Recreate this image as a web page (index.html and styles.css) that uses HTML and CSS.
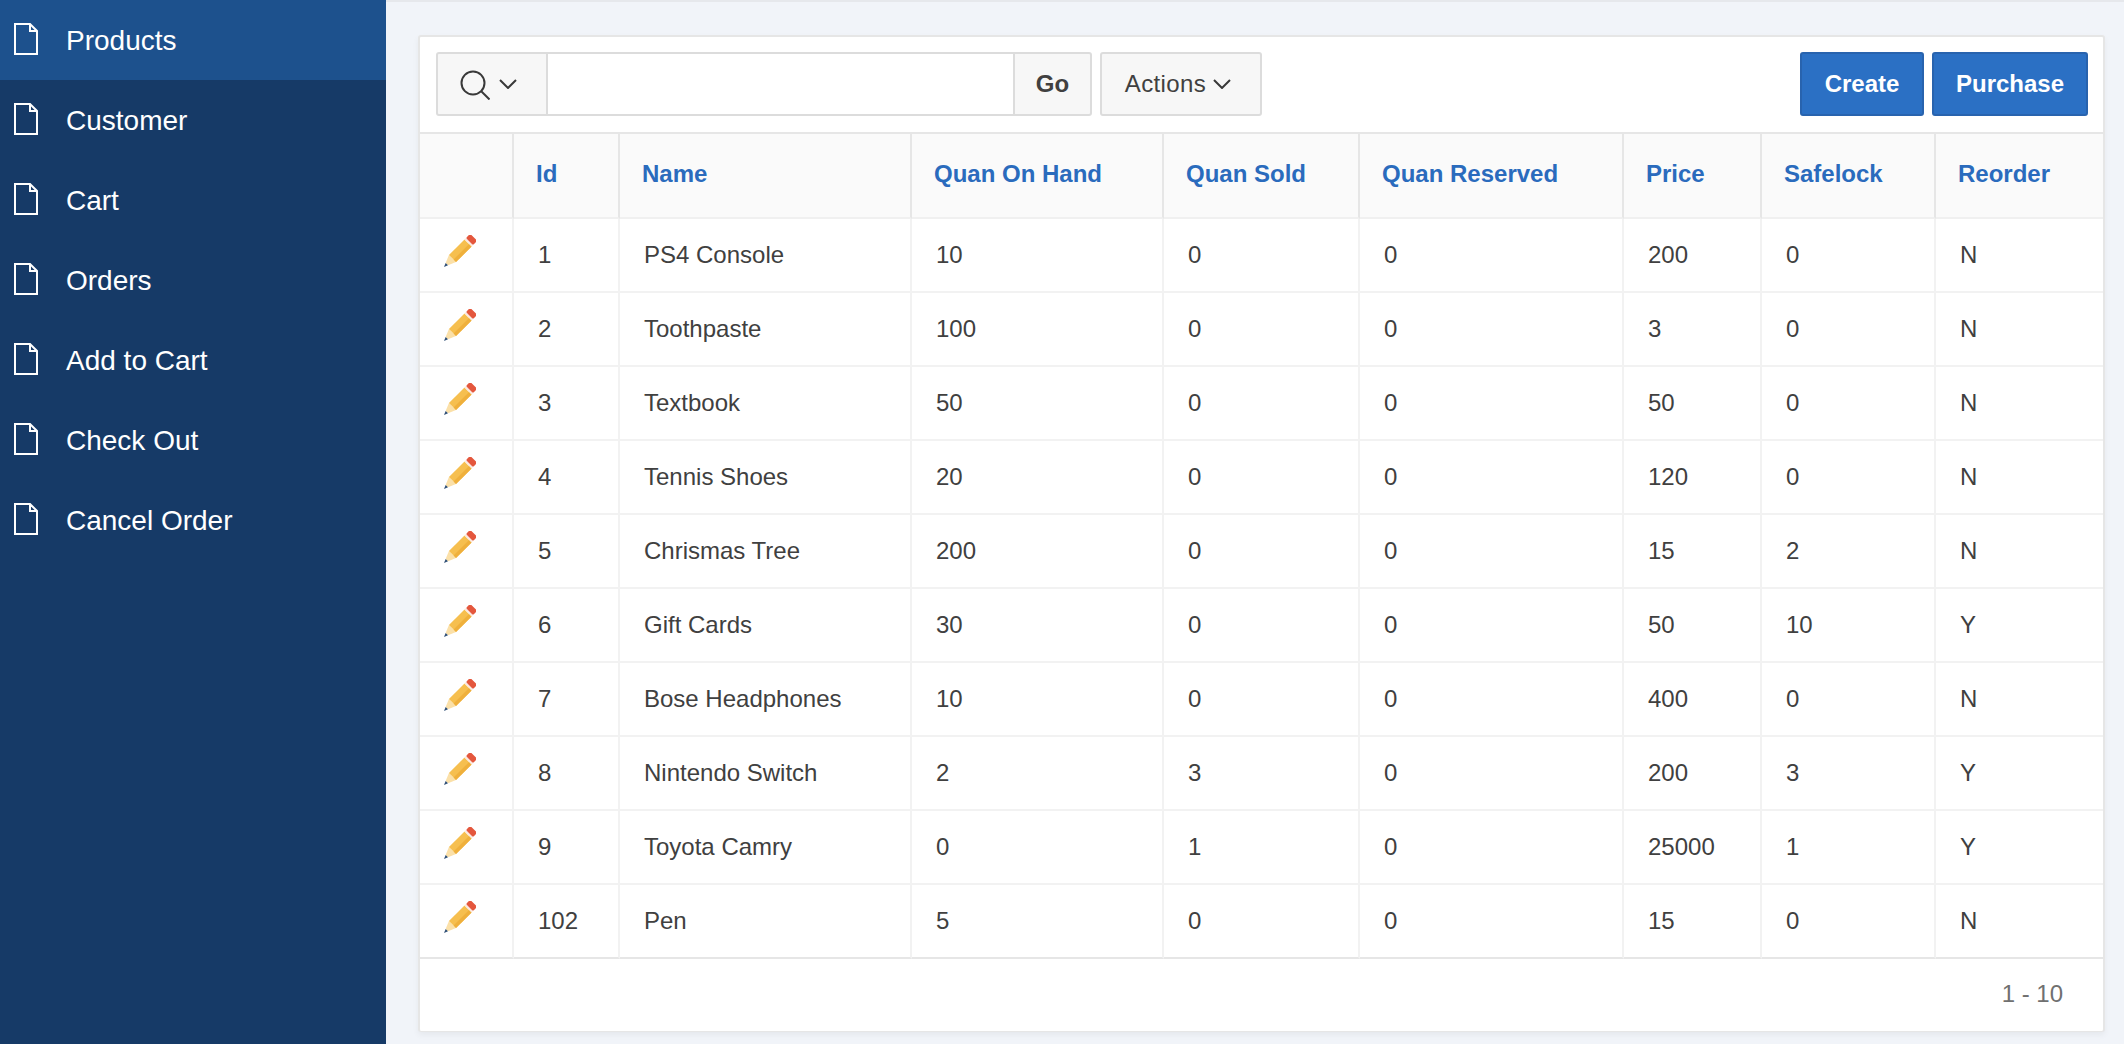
FILE: index.html
```html
<!DOCTYPE html>
<html lang="en">
<head>
<meta charset="utf-8">
<title>Products</title>
<link rel="stylesheet" href="styles.css">
</head>
<body>
<svg class="defs" width="0" height="0" aria-hidden="true">
  <symbol id="doc" viewBox="0 0 24 32">
    <path d="M1 1H16L23 8V31H1Z M16 1V8H23" fill="none" stroke="#fff" stroke-width="2"/>
  </symbol>
  <symbol id="pencil" viewBox="0 0 34 34">
    <g transform="translate(2 32) rotate(-45)">
      <path d="M4-1.7 12-5V5L4 1.7Z" fill="#fbe0a8"/>
      <path d="M0 0 4-1.7V1.7Z" fill="#2f4f75"/>
      <rect x="12" y="-5" width="22" height="10" fill="#f6bf4f"/>
      <rect x="12" y="1.5" width="22" height="3.5" fill="#efb03c"/>
      <rect x="34" y="-5" width="2" height="10" fill="#fbe9e0"/>
      <rect x="36" y="-5" width="6" height="10" rx="1.5" fill="#e4573d"/>
    </g>
  </symbol>
  <symbol id="chev" viewBox="0 0 18 10">
    <path d="M1 1 9 9 17 1" fill="none" stroke="#393939" stroke-width="2"/>
  </symbol>
</svg>
<div class="app">
  <nav class="side">
    <a class="item active"><svg class="doc"><use href="#doc"/></svg><span class="label">Products</span></a>
    <a class="item"><svg class="doc"><use href="#doc"/></svg><span class="label">Customer</span></a>
    <a class="item"><svg class="doc"><use href="#doc"/></svg><span class="label">Cart</span></a>
    <a class="item"><svg class="doc"><use href="#doc"/></svg><span class="label">Orders</span></a>
    <a class="item"><svg class="doc"><use href="#doc"/></svg><span class="label">Add to Cart</span></a>
    <a class="item"><svg class="doc"><use href="#doc"/></svg><span class="label">Check Out</span></a>
    <a class="item"><svg class="doc"><use href="#doc"/></svg><span class="label">Cancel Order</span></a>
  </nav>
  <main class="main">
    <section class="panel">
      <div class="toolbar">
        <div class="search">
          <button class="btn searchbtn">
            <svg class="mag" viewBox="0 0 30 30"><circle cx="13" cy="13" r="11.5" fill="none" stroke="#393939" stroke-width="2"/><path d="M21 21 29.5 29.5" fill="none" stroke="#393939" stroke-width="2"/></svg>
            <svg class="chev"><use href="#chev"/></svg>
          </button>
          <div class="input"></div>
          <button class="btn go">Go</button>
        </div>
        <button class="btn actions"><span class="actlabel">Actions</span><svg class="chev"><use href="#chev"/></svg></button>
        <div class="right">
          <button class="btn primary create">Create</button>
          <button class="btn primary purchase">Purchase</button>
        </div>
      </div>
      <table class="grid">
        <colgroup>
          <col class="c0"><col class="c1"><col class="c2"><col class="c3"><col class="c4"><col class="c5"><col class="c6"><col class="c7"><col class="c8">
        </colgroup>
        <thead>
          <tr><th></th><th>Id</th><th>Name</th><th>Quan On Hand</th><th>Quan Sold</th><th>Quan Reserved</th><th>Price</th><th>Safelock</th><th>Reorder</th></tr>
        </thead>
        <tbody>
          <tr><td class="edit"><svg class="pencil"><use href="#pencil"/></svg></td><td>1</td><td>PS4 Console</td><td>10</td><td>0</td><td>0</td><td>200</td><td>0</td><td>N</td></tr>
          <tr><td class="edit"><svg class="pencil"><use href="#pencil"/></svg></td><td>2</td><td>Toothpaste</td><td>100</td><td>0</td><td>0</td><td>3</td><td>0</td><td>N</td></tr>
          <tr><td class="edit"><svg class="pencil"><use href="#pencil"/></svg></td><td>3</td><td>Textbook</td><td>50</td><td>0</td><td>0</td><td>50</td><td>0</td><td>N</td></tr>
          <tr><td class="edit"><svg class="pencil"><use href="#pencil"/></svg></td><td>4</td><td>Tennis Shoes</td><td>20</td><td>0</td><td>0</td><td>120</td><td>0</td><td>N</td></tr>
          <tr><td class="edit"><svg class="pencil"><use href="#pencil"/></svg></td><td>5</td><td>Chrismas Tree</td><td>200</td><td>0</td><td>0</td><td>15</td><td>2</td><td>N</td></tr>
          <tr><td class="edit"><svg class="pencil"><use href="#pencil"/></svg></td><td>6</td><td>Gift Cards</td><td>30</td><td>0</td><td>0</td><td>50</td><td>10</td><td>Y</td></tr>
          <tr><td class="edit"><svg class="pencil"><use href="#pencil"/></svg></td><td>7</td><td>Bose Headphones</td><td>10</td><td>0</td><td>0</td><td>400</td><td>0</td><td>N</td></tr>
          <tr><td class="edit"><svg class="pencil"><use href="#pencil"/></svg></td><td>8</td><td>Nintendo Switch</td><td>2</td><td>3</td><td>0</td><td>200</td><td>3</td><td>Y</td></tr>
          <tr><td class="edit"><svg class="pencil"><use href="#pencil"/></svg></td><td>9</td><td>Toyota Camry</td><td>0</td><td>1</td><td>0</td><td>25000</td><td>1</td><td>Y</td></tr>
          <tr><td class="edit"><svg class="pencil"><use href="#pencil"/></svg></td><td>102</td><td>Pen</td><td>5</td><td>0</td><td>0</td><td>15</td><td>0</td><td>N</td></tr>
        </tbody>
      </table>
      <div class="foot">1 - 10</div>
    </section>
  </main>
</div>
</body>
</html>
```
FILE: styles.css
```css
* { box-sizing: border-box; }
html, body { margin: 0; height: 100%; overflow: hidden; }
body { font-family: "Liberation Sans", Arial, sans-serif; font-size: 24px; color: #404040; background: #f1f4f9; }
.defs { position: absolute; }
.app { display: flex; height: 1044px; }

.side { width: 386px; flex: none; background: #163a67; }
.item { display: flex; align-items: center; gap: 28px; height: 80px; padding-left: 14px; color: #fff; font-size: 28px; }
.item.active { background: #1d518d; }
.doc { width: 24px; height: 32px; flex: none; margin-top: -2px; }
.label { padding-top: 2px; }

.main { flex: 1; border-top: 2px solid #e6e8ec; padding: 33px 19px 0 32px; min-width: 0; }
.panel { background: #fff; border: 2px solid #e6e6e6; border-bottom-width: 1px; border-radius: 3px; box-shadow: 0 3px 6px rgba(0,0,0,.05); }

.toolbar { display: flex; align-items: flex-start; height: 95px; padding: 15px 15px 0 16px; }
.search { display: flex; height: 64px; width: 656px; }
.btn { height: 64px; font: inherit; color: #404040; background: #f7f7f7; border: 2px solid #dcdcdc; border-radius: 3px; padding: 0; display: flex; align-items: center; justify-content: center; }
.searchbtn { width: 112px; gap: 9px; padding-right: 7px; border-radius: 3px 0 0 3px; }
.mag { width: 30px; height: 30px; margin-top: 2px; }
.chev { width: 18px; height: 10px; }
.input { flex: 1; border: 2px solid #dcdcdc; border-width: 2px 0; background: #fff; }
.go { width: 79px; font-weight: 700; border-radius: 0 3px 3px 0; }
.actions { width: 162px; margin-left: 8px; gap: 7px; padding-right: 6px; }
.actlabel { letter-spacing: .4px; }
.right { margin-left: auto; display: flex; gap: 8px; }
.primary { color: #fff; font-weight: 700; background: #2b70c4; border-color: #2863ae; }
.create { width: 124px; }
.purchase { width: 156px; }

.grid { width: 100%; border-collapse: separate; border-spacing: 0; table-layout: fixed; }
.c0 { width: 94px; }
.c1 { width: 106px; }
.c2 { width: 292px; }
.c3 { width: 252px; }
.c4 { width: 196px; }
.c5 { width: 264px; }
.c6 { width: 138px; }
.c7 { width: 174px; }
.grid th { height: 87px; padding: 0 22px 4px; text-align: left; font-weight: 700; color: #2a6bbd; background: #fafafa; border-top: 2px solid #e6e6e6; border-bottom: 2px solid #f0f0f0; border-right: 2px solid #e6e6e6; }
.grid th:last-child, .grid td:last-child { border-right: 0; }
.grid td { height: 74px; padding: 0 22px 1px 24px; border-bottom: 2px solid #f2f2f2; border-right: 2px solid #f2f2f2; }
.grid tbody tr:last-child td { border-bottom: 2px solid #e6e6e6; }
.grid td.edit { padding: 0 0 0 22px; }
.pencil { display: block; width: 34px; height: 34px; margin-top: -6px; }

.foot { height: 72px; display: flex; align-items: center; justify-content: flex-end; padding: 0 40px 2px 0; color: #707070; }
```
